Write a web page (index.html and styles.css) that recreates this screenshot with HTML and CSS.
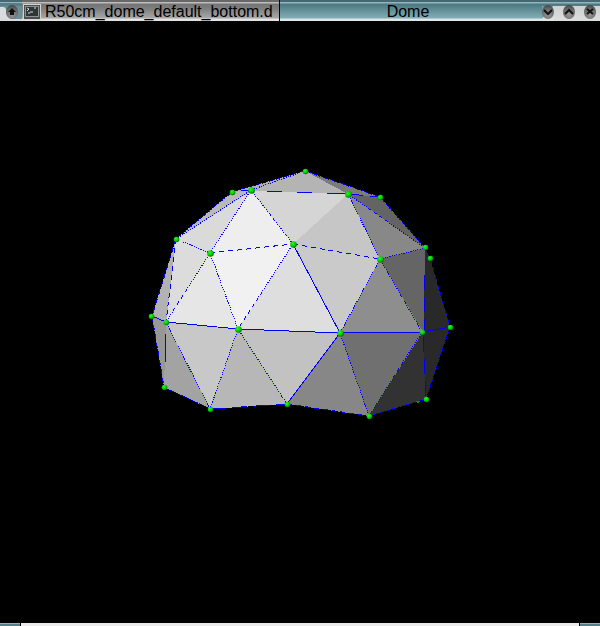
FILE: index.html
```html
<!DOCTYPE html>
<html lang="en">
<head>
<meta charset="utf-8">
<title>Dome</title>
<link rel="stylesheet" href="styles.css">
</head>
<body>
<div class="window">
  <header class="titlebar">
    <div class="tab tab-inactive">
      <div class="corner">
        <svg class="corner-shape" viewBox="0 0 22 21" aria-hidden="true"><path fill="#679199" d="M0 0h22v21H0z"/><path fill="#466872" d="M0 0h22v2H0z"/><path fill="#92b5bb" d="M0 2h22v1H0z"/><path fill="#55808a" d="M0 3h22v3H0z"/><path fill="#d9dcdc" d="M0 7h4l2 2v4l2 4 3 2h11v2H0z"/></svg>
        <button class="round" aria-label="Keep above"><svg viewBox="0 0 12 14"><path fill="#111" d="M6 3l4 4H8v3H4V7H2z"/></svg></button>
      </div>
      <svg class="app-icon" viewBox="0 0 18 16" aria-hidden="true"><path fill="#d5d5d3" d="M0 0h18v16H0z"/><path fill="#4b4f4e" d="M1 1h16v14H1z"/><path fill="#8c9290" d="M2 2h14v11H2z"/><path fill="#303635" d="M3 3h12v9H3z"/><path stroke="#d8dedb" fill="none" d="M4 4l2 1-2 2M7 8h3M5 9h2M11 4h2"/></svg>
      <span class="label">R50cm_dome_default_bottom.d</span>
    </div>
    <div class="tab tab-active"><h1 class="label">Dome</h1></div>
    <div class="controls">
      <button class="round" aria-label="Minimize"><svg viewBox="0 0 12 14"><path d="M2 5l4 4 4-4" fill="none" stroke="#111" stroke-width="2"/></svg></button>
      <button class="round" aria-label="Maximize"><svg viewBox="0 0 12 14"><path d="M2 9l4-4 4 4" fill="none" stroke="#111" stroke-width="2"/></svg></button>
      <button class="round" aria-label="Close"><svg viewBox="0 0 12 14"><path d="M3 4l6 5M9 4L3 9" fill="none" stroke="#111" stroke-width="2"/></svg></button>
    </div>
  </header>
  <main class="viewport">
    <svg class="scene" viewBox="0 21 600 602" role="img" aria-label="Geodesic dome model">
      <defs>
        <radialGradient id="ball" cx=".4" cy=".35" r=".65"><stop offset="0" stop-color="#2cf52c"/><stop offset=".6" stop-color="#00cc00"/><stop offset="1" stop-color="#006a00"/></radialGradient>
        <g id="big"><circle cx=".5" cy=".5" r="3.3" fill="url(#ball)"/></g>
        <g id="small"><circle cx=".5" cy=".5" r="2.8" fill="url(#ball)"/></g>
      </defs>
      <g shape-rendering="crispEdges">
        <path fill="#b0b0b0" d="M305 171L232 192 251 191z"/>
        <path fill="#b4b4b4" d="M305 171L251 191 348 194z"/>
        <path fill="#7b7b7b" d="M305 171L348 194 380 197z"/>
        <path fill="#b9b9b9" d="M232 192L251 191 176 239z"/>
        <path fill="#dadada" d="M251 191L176 239 210 253z"/>
        <path fill="#eeeeee" d="M251 191L210 253 293 244z"/>
        <path fill="#d5d5d5" d="M251 191L348 194 293 244z"/>
        <path fill="#c6c6c6" d="M348 194L293 244 380 259z"/>
        <path fill="#888888" d="M348 194L380 259 425 248z"/>
        <path fill="#646464" d="M348 194L380 197 425 248z"/>
        <path fill="#b2b2b2" d="M176 239L152 316 166 322z"/>
        <path fill="#dcdcdc" d="M176 239L166 322 210 253z"/>
        <path fill="#e6e6e6" d="M210 253L166 322 238 329z"/>
        <path fill="#f1f1f1" d="M210 253L293 244 238 329z"/>
        <path fill="#dedede" d="M293 244L238 329 340 333z"/>
        <path fill="#cacaca" d="M293 244L340 333 380 259z"/>
        <path fill="#8e8e8e" d="M380 259L340 333 423 332z"/>
        <path fill="#292929" d="M425 248L430 258 450 327 423 332z"/>
        <path fill="#656565" d="M380 259L425 248 424 332 423 332z"/>
        <path fill="#979797" d="M152 316L166 322 164 387z"/>
        <path fill="#a3a3a3" d="M166 322L164 387 210 409z"/>
        <path fill="#c8c8c8" d="M166 322L210 409 238 329z"/>
        <path fill="#b7b7b7" d="M238 329L210 409 287 404z"/>
        <path fill="#c2c2c2" d="M238 329L287 404 340 333z"/>
        <path fill="#878787" d="M340 333L287 404 369 416z"/>
        <path fill="#707070" d="M340 333L369 416 423 332z"/>
        <path fill="#323232" d="M423 332L369 416 426 399z"/>
        <path fill="#292929" d="M423 332L426 399 450 327z"/>
      </g>
      <g class="edges" shape-rendering="crispEdges">
        <path d="M293 244L340 333M166 322L238 329 340 333 422 332M152 316L166 322M423 332L450 327M340 333L287 404"/>
        <path class="dot" d="M305 171L232 192M305 171L251 190M305 171L380 197M232 192L176 239M251 190L176 239M251 190L210 253M251 190L293 244M176 239L210 253M210 253L166 322M210 253L238 329M293 244L238 329M348 194L380 259M348 194L425 248M380 197L425 248M380 259L340 333M380 259L422 332M380 259L425 248M166 322L210 409M238 329L210 409M238 329L287 404M340 333L369 416M422 332L369 416M450 327L426 399M164 387L210 409M369 416L426 399"/>
        <path class="dash" d="M210 253L293 244M293 244L380 259M176 239L152 316M176 239L166 322M152 316L164 387M287 404L369 416M430 258L450 327"/>
        <path class="long" d="M241 191L251 190M348 194L380 197M210 409L287 404M424 275L424 332M423 337L426 399"/>
        <path d="M267 191.500h15M297 192.500h15M327 193.500h21M165.500 334v28"/>
      </g>
      <g>
        <use href="#small" x="305" y="171"/><use href="#small" x="232" y="192"/><use href="#big" x="251" y="190"/>
        <use href="#big" x="348" y="194"/><use href="#small" x="380" y="197"/><use href="#small" x="176" y="239"/>
        <use href="#big" x="210" y="253"/><use href="#big" x="293" y="244"/><use href="#big" x="380" y="259"/>
        <use href="#small" x="430" y="258"/><use href="#small" x="425" y="247"/><use href="#small" x="151" y="316"/>
        <use href="#small" x="166" y="322"/><use href="#big" x="238" y="329"/><use href="#big" x="340" y="333"/>
        <use href="#small" x="422" y="332"/><use href="#small" x="450" y="327"/><use href="#small" x="164" y="387"/>
        <use href="#small" x="210" y="409"/><use href="#small" x="287" y="404"/><use href="#small" x="369" y="416"/>
        <use href="#small" x="426" y="399"/><path fill="#008a00" d="M416 401h4v1h-1v1h-2v-1h-1z"/>
      </g>
    </svg>
  </main>
  <footer class="frame"><span class="grip grip-left"></span><span class="grip grip-right"></span></footer>
</div>
</body>
</html>
```

FILE: styles.css
```css
* { box-sizing: border-box; }

body {
  margin: 0;
  background: #000;
  color: #000;
  font-family: "Liberation Sans", sans-serif;
  font-size: 16px;
}

.window {
  display: flex;
  flex-direction: column;
  height: 100vh;
}

.titlebar {
  display: flex;
  height: 21px;
  background: linear-gradient(#466872 0 2px, #92b5bb 2px 3px, #4d7882 4px, #5d8a94 9px, #82adb5 18px, #dce6e7 19px);
}

.tab {
  display: flex;
  align-items: center;
  min-width: 0;
}

.tab-inactive {
  flex: 0 0 280px;
  border-right: 1px solid #000;
  background: linear-gradient(#686868 0 2px, #bdbdbd 2px 3px, #747474 4px, #808080 9px, #a8a8a8 18px, #e2e2e2 19px);
}

.tab-active {
  flex: 1;
  justify-content: center;
  padding-right: 6px;
}

.label {
  margin: 0;
  padding-top: 3px;
  font-size: 16px;
  font-weight: 400;
  line-height: 18px;
  white-space: nowrap;
}

.corner {
  display: grid;
  flex: none;
  width: 22px;
  height: 21px;
}

.corner > * { grid-area: 1 / 1; }

.corner .round {
  align-self: center;
  justify-self: end;
  margin: 3px 4px 0 0;
}

.app-icon {
  flex: none;
  width: 18px;
  height: 16px;
  margin: 2px 4px 0 1px;
}

.controls {
  display: flex;
  gap: 9px;
  padding: 5px 4px 0 0;
  background: linear-gradient(to bottom right, #75a1aa 48%, #dcdddd 50%) 0 6px / 12px 13px no-repeat,
    linear-gradient(#cfd1d1, #e2e2e2) 12px 6px no-repeat;
}

.round {
  width: 12px;
  height: 14px;
  padding: 0;
  border: 0;
  border-radius: 50%;
  background: radial-gradient(circle at 50% 70%, #999, #626262 60%, #333);
}

.round svg { display: block; }

.viewport {
  display: flex;
  flex: 1;
  min-height: 0;
}

.scene {
  flex: 1;
  min-width: 0;
}

.edges {
  fill: none;
  stroke: #00f;
  stroke-width: 1px;
}

.dot { stroke-dasharray: 1.2 1.2; }
.dash { stroke-dasharray: 5 4; }
.long { stroke-dasharray: 15 7; }

.frame {
  display: flex;
  justify-content: space-between;
  height: 3px;
  background: #ebebeb;
}

.grip {
  width: 21px;
  background: linear-gradient(#8db3ba 1px, #55808a 1px);
}

.grip-left { border-right: 1px solid #000; }
.grip-right { border-left: 1px solid #000; }
```
